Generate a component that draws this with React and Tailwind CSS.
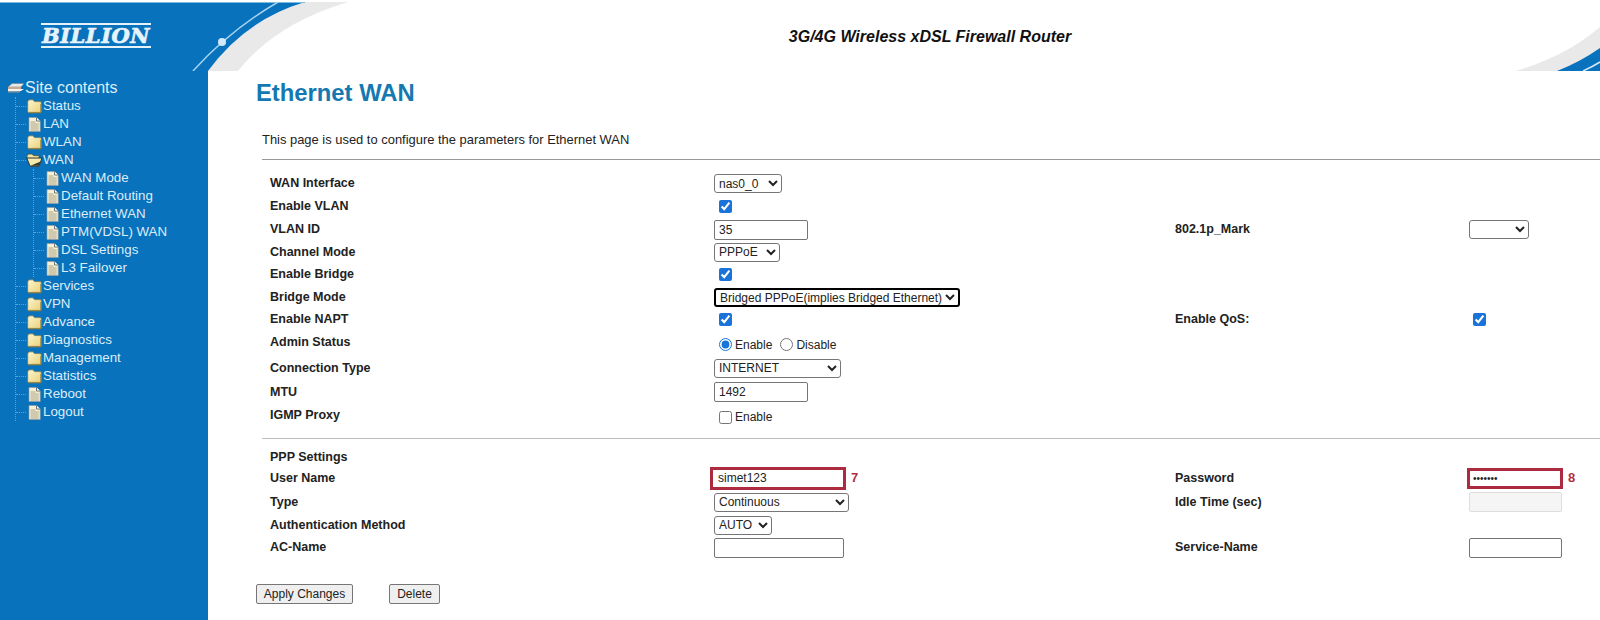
import React from "react";

const Folder = () => (
  <svg width="15" height="15" viewBox="0 0 15 15" className="shrink-0">
    <defs>
      <linearGradient id="fg" x1="0" y1="0" x2="1" y2="1">
        <stop offset="0" stopColor="#fdf7cf" />
        <stop offset="1" stopColor="#e8cf78" />
      </linearGradient>
    </defs>
    <path d="M0.7 3 Q0.7 0.8 3 0.8 H6 L7.5 2.6 H13 Q14.4 2.6 14.4 4 V12.6 Q14.4 14 13 14 H2 Q0.7 14 0.7 12.6 Z" fill="url(#fg)" stroke="#6f7a5e" strokeWidth="0.8" />
    <path d="M1.5 13.4 H13.8 V5" fill="none" stroke="#8c7a3c" strokeWidth="0.9" />
  </svg>
);

const OpenFolder = () => (
  <svg width="17" height="14" viewBox="0 0 17 14" className="shrink-0">
    <path d="M1 3 Q1 1 3 1 H6 L7.5 2.6 H13 V6 H1 Z" fill="#f3e6a2" stroke="#3f4a48" strokeWidth="0.8" />
    <path d="M0.8 5 H16 L13 13.2 H4 Z" fill="#f5e9ae" stroke="#2d3433" strokeWidth="1" />
    <path d="M4.5 12.8 H13 L14.6 8.5 Z" fill="#3a3a2a" />
  </svg>
);

const FileIcon = () => (
  <svg width="13" height="15" viewBox="0 0 13 15" className="shrink-0">
    <path d="M1 0.5 H8.5 L12.2 4 V14.5 H1 Z" fill="#f8f0d2" stroke="#8f9aa0" strokeWidth="0.7" />
    <path d="M8.5 0.5 V4 H12.2" fill="#ffffff" stroke="#5d666c" strokeWidth="0.9" />
    <path d="M2.5 5 H7.5 M2.5 7 H10.7 M2.5 9 H10.7 M2.5 11 H10.7 M2.5 13 H10.7" stroke="#8f8f7c" strokeWidth="0.8" />
  </svg>
);

const Globe = () => (
  <svg width="18" height="13" viewBox="0 0 18 13" className="shrink-0">
    <path d="M1 5 L5 1.5 H17 L14 5 Z" fill="#e8e8e8" stroke="#6b7b85" strokeWidth="0.5" />
    <path d="M1 5 H14 V7 H1 Z" fill="#c9a98a" />
    <path d="M1 7 H17 L14 9 H1 Z" fill="#f4f4f4" />
    <path d="M1 9 H13 V10.5 H1 Z" fill="#8d97a0" />
  </svg>
);

const TreeRow = ({ icon, label }) => (
  <div className="flex h-[18px] items-center">
    <span className="h-0 w-[10px] shrink-0 border-t border-dotted border-[#5aa3d4]" />
    <span className="ml-[1px] flex w-[15px] shrink-0 justify-center">{icon}</span>
    <span className="ml-[1px] whitespace-nowrap">{label}</span>
  </div>
);

const topA = [
  ["Status", <Folder />],
  ["LAN", <FileIcon />],
  ["WLAN", <Folder />],
  ["WAN", <OpenFolder />],
];
const subs = ["WAN Mode", "Default Routing", "Ethernet WAN", "PTM(VDSL) WAN", "DSL Settings", "L3 Failover"];
const topB = [
  ["Services", <Folder />],
  ["VPN", <Folder />],
  ["Advance", <Folder />],
  ["Diagnostics", <Folder />],
  ["Management", <Folder />],
  ["Statistics", <Folder />],
  ["Reboot", <FileIcon />],
  ["Logout", <FileIcon />],
];

const Sidebar = () => (
  <aside className="w-[208px] shrink-0 bg-[#0872bd] pt-[8px] text-[13.33px] text-[#dcedf8]">
    <div className="flex h-[18px] items-center pl-[7px] text-[16px]">
      <Globe />
      <span>Site contents</span>
    </div>
    <div className="ml-[15px] w-fit border-l border-dotted border-[#5aa3d4]">
      {topA.map(([l, i]) => (
        <TreeRow key={l} label={l} icon={i} />
      ))}
      <div className="ml-[17px] w-fit border-l border-dotted border-[#5aa3d4]">
        {subs.map((l) => (
          <TreeRow key={l} label={l} icon={<FileIcon />} />
        ))}
      </div>
      {topB.map(([l, i]) => (
        <TreeRow key={l} label={l} icon={i} />
      ))}
    </div>
  </aside>
);

const inputCls = "h-[20px] rounded-[2px] border border-[#767676] bg-white px-[4px] text-[12px] text-[#222]";
const selectCls = "h-[19px] rounded-[3px] border border-[#767676] bg-white text-[12px] text-[#222]";

const Cb = () => <input type="checkbox" defaultChecked className="ml-[5px] h-[13px] w-[13px] accent-[#1a73d8]" />;

const Row = ({ h, label, control, label2, control2 }) => (
  <div className={`grid grid-cols-[444px_461px_294px_1fr] items-center ${h}`}>
    <span className="font-bold">{label}</span>
    <div className="flex items-center">{control}</div>
    <span className="font-bold">{label2}</span>
    <div className="flex items-center">{control2}</div>
  </div>
);

const Mark = ({ n }) => <span className="ml-[5px] text-[13px] font-bold text-[#b02f3f]">{n}</span>;

export default function App() {
  return (
    <div className="flex h-[620px] w-[1600px] flex-col overflow-hidden bg-white font-['Liberation_Sans',Arial,sans-serif] text-[#222]">
      <header className="flex h-[71px] shrink-0 pt-[2px]">
        <div className="flex w-[170px] shrink-0 flex-col items-start border-t border-[#7dbbdc] bg-[#0872bd] pl-[41px] pt-[20px]">
          <div className="w-[110px] border-y-2 border-[#e6f3fb] py-[1px] text-center font-['DejaVu_Serif',serif] text-[21px] leading-[19px] font-bold tracking-[0.5px] text-[#e6f3fb] italic [-webkit-text-stroke:0.7px_#e6f3fb]">
            BILLION
          </div>
        </div>
        <svg width="190" height="69" viewBox="0 0 190 69" className="shrink-0">
          <path d="M178 0 Q105 22 68 69 L38 69 Q75 18 135 0 Z" fill="#e9e9e9" />
          <path d="M0 0 H135 Q75 18 38 69 H0 Z" fill="#0872bd" />
          <path d="M0 0.5 H135" stroke="#7dbbdc" strokeWidth="1" />
          <path d="M108 0 Q60 28 23 69" fill="none" stroke="#a8d4ee" strokeWidth="1.5" />
          <circle cx="52" cy="40" r="4" fill="#d3ebf9" />
        </svg>
        <div className="flex flex-1 items-center justify-center text-[16px] font-bold text-[#111] italic">
          3G/4G Wireless xDSL Firewall Router
        </div>
        <svg width="100" height="69" viewBox="0 0 100 69" className="shrink-0">
          <path d="M15 69 Q65 55 100 25 V69 Z" fill="#e9e9e9" />
          <path d="M57 69 Q80 60 100 46 V69 Z" fill="#0872bd" />
          <path d="M83 69 Q92 65 100 60" fill="none" stroke="#cfe8f7" strokeWidth="1.5" />
        </svg>
      </header>

      <div className="flex flex-1">
        <Sidebar />
        <main className="flex-1 pl-[48px] text-[12.5px]">
          <h1 className="mt-[8px] h-[28px] text-[23.8px] leading-[28px] font-bold text-[#1478b1]">Ethernet WAN</h1>
          <p className="mt-[25px] ml-[6px] h-[16px] text-[12.93px] leading-[16px]">
            This page is used to configure the parameters for Ethernet WAN
          </p>
          <hr className="mt-[11px] ml-[6px] border-t border-[#999]" />

          <div className="mt-[12px] pl-[14px]">
            <Row h="h-[23px]" label="WAN Interface" control={<select className={`${selectCls} w-[68px]`}><option>nas0_0</option></select>} />
            <Row h="h-[23px]" label="Enable VLAN" control={<Cb />} />
            <Row
              h="h-[23px]"
              label="VLAN ID"
              control={<input defaultValue="35" className={`${inputCls} w-[94px]`} />}
              label2="802.1p_Mark"
              control2={<select className={`${selectCls} w-[60px]`}><option></option></select>}
            />
            <Row h="h-[22px]" label="Channel Mode" control={<select className={`${selectCls} w-[66px]`}><option>PPPoE</option></select>} />
            <Row h="h-[23px]" label="Enable Bridge" control={<Cb />} />
            <Row
              h="h-[22px]"
              label="Bridge Mode"
              control={
                <select className="h-[19px] w-[246px] rounded-[3px] border-2 border-black bg-white text-[12px] text-[#222]">
                  <option>Bridged PPPoE(implies Bridged Ethernet)</option>
                </select>
              }
            />
            <Row
              h="h-[23px]"
              label="Enable NAPT"
              control={<Cb />}
              label2="Enable QoS:"
              control2={<input type="checkbox" defaultChecked className="ml-[4px] h-[13px] w-[13px] accent-[#1a73d8]" />}
            />
            <Row
              h="h-[23px]"
              label="Admin Status"
              control={
                <div className="mt-[4px] flex items-center text-[12px]">
                  <input type="radio" name="admin" defaultChecked className="ml-[5px] h-[13px] w-[13px] accent-[#1a73d8]" />
                  <span className="ml-[3px]">Enable</span>
                  <input type="radio" name="admin" className="ml-[8px] h-[13px] w-[13px]" />
                  <span className="ml-[3px]">Disable</span>
                </div>
              }
            />
            <Row h="h-[28px]" label="Connection Type" control={<select className={`${selectCls} w-[127px]`}><option>INTERNET</option></select>} />
            <Row h="h-[20px]" label="MTU" control={<input defaultValue="1492" className={`${inputCls} w-[94px]`} />} />
            <Row
              h="h-[27px]"
              label="IGMP Proxy"
              control={
                <div className="mt-[3px] flex items-center text-[12px]">
                  <input type="checkbox" className="ml-[5px] h-[13px] w-[13px]" />
                  <span className="ml-[3px]">Enable</span>
                </div>
              }
            />
          </div>

          <hr className="mt-[9px] ml-[6px] border-t border-[#bbb]" />

          <div className="mt-[9px] pl-[14px]">
            <Row h="h-[18px]" label="PPP Settings" />
            <Row
              h="h-[24px]"
              label="User Name"
              control={
                <>
                  <input defaultValue="simet123" className="-ml-[4px] h-[23px] w-[136px] border-[3px] border-[#ad2b3e] bg-white px-[5px] text-[12px] text-[#222]" />
                  <Mark n="7" />
                </>
              }
              label2="Password"
              control2={
                <>
                  <input type="password" defaultValue="simet12" className="-ml-[2px] h-[21px] w-[96px] border-[3px] border-[#ad2b3e] bg-white px-[3px] text-[10px] text-[#222]" />
                  <Mark n="8" />
                </>
              }
            />
            <Row
              h="h-[24px]"
              label="Type"
              control={<select className={`${selectCls} w-[135px]`}><option>Continuous</option></select>}
              label2="Idle Time (sec)"
              control2={<input disabled className="h-[20px] w-[93px] rounded-[2px] border border-[#ddd] bg-[#f5f5f5]" />}
            />
            <Row h="h-[22px]" label="Authentication Method" control={<select className={`${selectCls} w-[58px]`}><option>AUTO</option></select>} />
            <Row
              h="h-[23px]"
              label="AC-Name"
              control={<input className={`${inputCls} w-[130px]`} />}
              label2="Service-Name"
              control2={<input className={`${inputCls} w-[93px]`} />}
            />
          </div>

          <div className="mt-[25px] flex gap-[36px] text-[12px]">
            <button className="h-[20px] w-[97px] rounded-[2px] border border-[#767676] bg-[#efefef] text-[#222]">Apply Changes</button>
            <button className="h-[20px] w-[51px] rounded-[2px] border border-[#767676] bg-[#efefef] text-[#222]">Delete</button>
          </div>
        </main>
      </div>
    </div>
  );
}
